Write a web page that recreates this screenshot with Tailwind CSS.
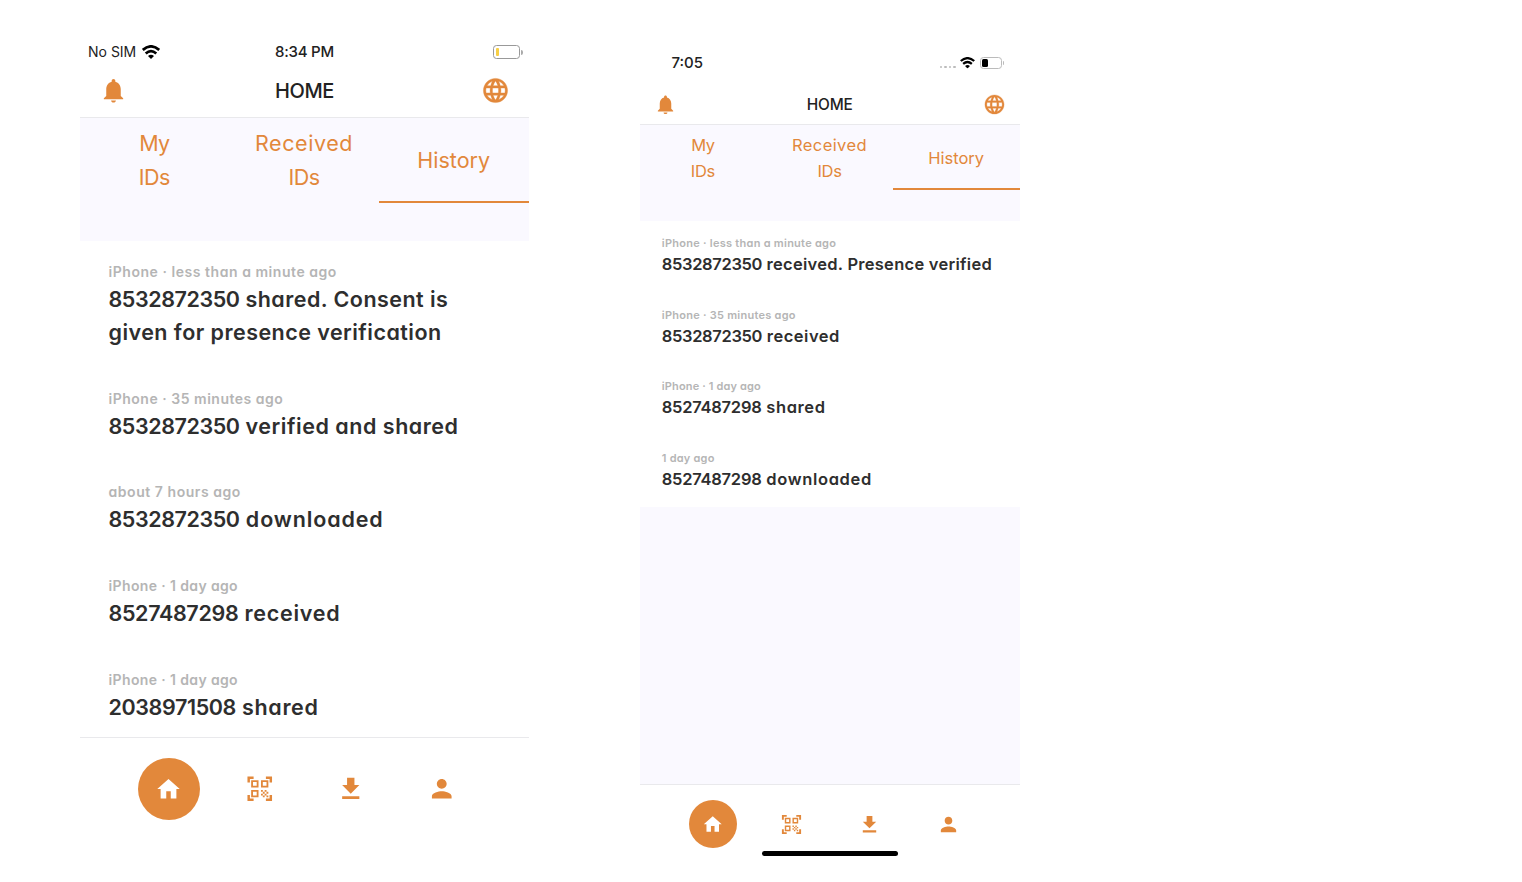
<!DOCTYPE html>
<html lang="en">
<head>
<meta charset="utf-8">
<title>Home – History</title>
<script src="https://cdn.jsdelivr.net/npm/@tailwindcss/browser@4"></script>
</head>
<body class="h-[882px] overflow-hidden bg-white font-[Inter,sans-serif] text-[#2e2e2e] [font-feature-settings:'cv11']">
<svg class="hidden">
  <symbol id="bell" viewBox="0 0 24 24"><path d="M12 22c1.1 0 2-.7 2-1.7h-4c0 1 .89 1.7 2 1.7zm6-5.5v-5.5c0-3.07-1.64-5.64-4.5-6.32V4c0-.83-.67-1.5-1.5-1.5s-1.5.67-1.5 1.5v.68C7.63 5.36 6 7.92 6 11v5.5l-2 2v.7h16v-.7l-2-2z"/></symbol>
  <symbol id="globe" viewBox="0 0 24 24"><path stroke-width=".3" class="stroke-[#e2883b]" d="M11.99 2C6.47 2 2 6.48 2 12s4.47 10 9.99 10C17.52 22 22 17.52 22 12S17.52 2 11.99 2zm6.93 6h-2.95c-.32-1.25-.78-2.45-1.38-3.56 1.84.63 3.37 1.91 4.33 3.56zM12 4.04c.83 1.2 1.48 2.53 1.91 3.96h-3.82c.43-1.43 1.08-2.76 1.91-3.96zM4.26 14C4.1 13.36 4 12.69 4 12s.1-1.36.26-2h3.38c-.08.66-.14 1.32-.14 2s.06 1.34.14 2H4.26zm.82 2h2.95c.32 1.25.78 2.45 1.38 3.56-1.84-.63-3.37-1.9-4.33-3.56zm2.95-8H5.08c.96-1.66 2.49-2.93 4.33-3.56C8.81 5.55 8.35 6.75 8.03 8zM12 19.96c-.83-1.2-1.48-2.53-1.91-3.96h3.82c-.43 1.43-1.08 2.76-1.91 3.96zM14.34 14H9.66c-.09-.66-.16-1.32-.16-2s.07-1.35.16-2h4.68c.09.65.16 1.32.16 2s-.07 1.34-.16 2zm.25 5.56c.6-1.11 1.06-2.31 1.38-3.56h2.95c-.96 1.65-2.49 2.93-4.33 3.56zM16.36 14c.08-.66.14-1.32.14-2s-.06-1.34-.14-2h3.38c.16.64.26 1.31.26 2s-.1 1.36-.26 2h-3.38z"/></symbol>
  <symbol id="home" viewBox="0 0 24 24"><path d="M10 20.5v-6.5h4v6.5h5v-8.5h3L12 3 2 12h3v8.5z"/></symbol>
  <symbol id="qr" viewBox="0 0 24 24"><path d="M9.5 6.5v3h-3v-3h3M11 5H5v6h6V5zm-1.5 9.5v3h-3v-3h3M11 13H5v6h6v-6zm6.5-6.5v3h-3v-3h3M19 5h-6v6h6V5zm-6 8h1.5v1.5H13V13zm1.5 1.5H16V16h-1.5v-1.5zM16 13h1.5v1.5H16V13zm-3 3h1.5v1.5H13V16zm1.5 1.5H16V19h-1.5v-1.5zM16 16h1.5v1.5H16V16zm1.5-1.5H19V16h-1.5v-1.5zm0 3H19V19h-1.5v-1.5zM22 7h-2V4h-3V2h5v5zm0 15v-5h-2v3h-3v2h5zM2 22h5v-2H4v-3H2v5zM2 2v5h2V4h3V2H2z"/></symbol>
  <symbol id="download" viewBox="0 0 24 24"><path d="M5 20.3h14v-2.2H5v2.2zM19 9h-4V3H9v6H5l7 7 7-7z"/></symbol>
  <symbol id="person" viewBox="0 0 24 24"><path d="M12 12c2.21 0 4-1.79 4-4s-1.79-4-4-4-4 1.79-4 4 1.79 4 4 4zm0 2c-2.67 0-8 1.34-8 4v2h16v-2c0-2.66-5.33-4-8-4z"/></symbol>
  <symbol id="wifi" viewBox="0 0 18 14"><path d="M.8 4.9Q9-2.2 17.2 4.9M3.7 8.4q5.3-4.6 10.6 0" fill="none" stroke="currentColor" stroke-width="2.7"/><path d="M6 10.9q3-2.4 6 0L9 14z" fill="currentColor"/></symbol>
</svg>

<main class="flex h-full items-start gap-[111px] pl-[80px]">

  <!-- Sharing device -->
  <section class="flex h-[842px] w-[449px] shrink-0 flex-col pt-[40px]">
    <div class="grid h-[24px] shrink-0 grid-cols-3 items-center text-[15px] leading-[24px]">
      <div class="flex items-center gap-[6px] pl-[8px] text-[#222]">
        <span class="text-[14px]">No SIM</span>
        <svg class="h-[14px] w-[18px] text-black"><use href="#wifi"/></svg>
      </div>
      <div class="text-center font-medium tracking-[-0.22px] text-[#222]">8:34 PM</div>
      <div class="flex items-center justify-end gap-px pr-[6px]">
        <div class="h-[14px] w-[27px] rounded-[3.5px] border border-[#999] p-[2px]"><div class="h-full w-[3px] rounded-[1px] bg-[#f7cf46]"></div></div>
        <div class="h-[5px] w-[2px] rounded-r bg-[#aaa]"></div>
      </div>
    </div>
    <header class="flex h-[54px] shrink-0 items-center justify-between border-b border-[#e9e9ec] pr-[19px] pl-[19px]">
      <svg class="h-[29px] w-[29px] fill-[#e2883b]"><use href="#bell"/></svg>
      <h1 class="text-[20px] leading-[30px] font-medium tracking-[-0.39px] text-[#222]">HOME</h1>
      <svg class="h-[29px] w-[29px] fill-[#e2883b]"><use href="#globe"/></svg>
    </header>
    <nav class="flex h-[123px] shrink-0 bg-[#faf9ff] text-center text-[21.5px] leading-[33.5px] text-[#e2883b]">
      <div class="flex h-[85px] flex-1 flex-col justify-center pr-px"><span class="tracking-[-0.8px]">My</span><span class="tracking-[-0.55px]">IDs</span></div>
      <div class="flex h-[85px] flex-1 flex-col justify-center pr-px"><span class="tracking-[0.57px]">Received</span><span class="tracking-[-0.55px]">IDs</span></div>
      <div class="flex h-[85px] flex-1 flex-col justify-center border-b-[2.5px] border-[#e2883b] pt-[2px] pr-px">History</div>
    </nav>
    <ul class="h-[496px] shrink-0 overflow-hidden pl-[28.5px] text-[21.5px] leading-[33.5px] font-semibold whitespace-nowrap">
      <li class="h-[127.3px] pt-[20.5px]">
        <p class="mb-[2px] text-[14px] leading-[19px] tracking-[0.54px] text-[#b5b5b5]">iPhone · less than a minute ago</p>
        <p class="tracking-[0.46px]"><span class="tracking-[-0.42px]">8532872350</span> shared. Consent is<br>given for presence verification</p>
      </li>
      <li class="h-[93.7px] pt-[20.5px]">
        <p class="mb-[2px] text-[14px] leading-[19px] tracking-[0.51px] text-[#b5b5b5]">iPhone · 35 minutes ago</p>
        <p class="tracking-[0.53px]"><span class="tracking-[-0.42px]">8532872350</span> verified and shared</p>
      </li>
      <li class="h-[93.7px] pt-[20.5px]">
        <p class="mb-[2px] text-[14px] leading-[19px] tracking-[0.55px] text-[#b5b5b5]">about 7 hours ago</p>
        <p class="tracking-[0.86px]"><span class="tracking-[-0.42px]">8532872350</span> downloaded</p>
      </li>
      <li class="h-[93.7px] pt-[20.5px]">
        <p class="mb-[2px] text-[14px] leading-[19px] tracking-[0.37px] text-[#b5b5b5]">iPhone · 1 day ago</p>
        <p class="tracking-[0.75px]"><span class="tracking-[-0.34px]">8527487298</span> received</p>
      </li>
      <li class="h-[93.7px] pt-[20.5px]">
        <p class="mb-[2px] text-[14px] leading-[19px] tracking-[0.37px] text-[#b5b5b5]">iPhone · 1 day ago</p>
        <p class="tracking-[0.65px]"><span class="tracking-[-0.38px]">2038971508</span> shared</p>
      </li>
    </ul>
    <footer class="flex h-[104px] shrink-0 items-center border-t border-[#e9e9ec] pb-[2px] pl-[43px] fill-[#e2883b]">
      <div class="flex w-[91px] justify-center"><div class="flex h-[62px] w-[62px] items-center justify-center rounded-full bg-[#e2883b]"><svg class="h-[28px] w-[27px] fill-white"><use href="#home"/></svg></div></div>
      <div class="flex w-[91px] justify-center"><svg class="h-[29.5px] w-[29.5px]"><use href="#qr"/></svg></div>
      <div class="flex w-[91px] justify-center"><svg class="h-[29.5px] w-[29.5px]"><use href="#download"/></svg></div>
      <div class="flex w-[91px] justify-center"><svg class="h-[29.5px] w-[29.5px]"><use href="#person"/></svg></div>
    </footer>
  </section>

  <!-- Receiving device -->
  <section class="flex h-[870px] w-[380px] shrink-0 flex-col pt-[51px]">
    <div class="flex h-[24px] shrink-0 items-center justify-between pr-[16px] pl-[31.5px]">
      <div class="text-[15px] leading-[24px] font-medium text-[#222]">7:05</div>
      <div class="flex items-center">
        <div class="mt-[8px] mr-[4px] flex gap-[2px]"><i class="size-[2.5px] rounded-full bg-[#bbb]"></i><i class="size-[2.5px] rounded-full bg-[#bbb]"></i><i class="size-[2.5px] rounded-full bg-[#bbb]"></i><i class="size-[2.5px] rounded-full bg-[#bbb]"></i></div>
        <svg class="mr-[5px] h-[11.5px] w-[15px] text-black"><use href="#wifi"/></svg>
        <div class="h-[12px] w-[22.5px] rounded-[3.5px] border border-[#bbb] p-[1px]"><div class="h-full w-[6px] rounded-[1.5px] bg-black"></div></div>
        <div class="ml-px h-[4px] w-px rounded-r bg-[#bbb]"></div>
      </div>
    </div>
    <header class="flex h-[50px] shrink-0 items-end justify-between border-b border-[#e9e9ec] pr-[14.5px] pb-[8.5px] pl-[14px]">
      <svg class="h-[23px] w-[23px] fill-[#e2883b]"><use href="#bell"/></svg>
      <h1 class="text-[15.4px] leading-[22px] font-medium tracking-[-0.15px] text-[#222]">HOME</h1>
      <svg class="h-[23px] w-[23px] fill-[#e2883b]"><use href="#globe"/></svg>
    </header>
    <nav class="flex h-[95.5px] shrink-0 bg-[#faf9ff] text-center text-[16.5px] leading-[25.6px] text-[#e2883b]">
      <div class="flex h-[65px] flex-1 flex-col justify-center pt-[2px] pr-px"><span class="tracking-[-0.6px]">My</span><span class="tracking-[-0.35px]">IDs</span></div>
      <div class="flex h-[65px] flex-1 flex-col justify-center pt-[2px] pr-px"><span class="tracking-[0.41px]">Received</span><span class="tracking-[-0.35px]">IDs</span></div>
      <div class="flex h-[65px] flex-1 flex-col justify-center border-b-[2px] border-[#e2883b] pt-[4px] pr-px">History</div>
    </nav>
    <div class="h-[563.5px] shrink-0 bg-[#faf9ff]">
      <ul class="bg-white pl-[21.8px] text-[16.5px] leading-[25.6px] font-semibold whitespace-nowrap">
        <li class="h-[71.7px] pt-[15.4px]">
          <p class="mb-[2px] text-[11px] leading-[14px] tracking-[0.26px] text-[#b5b5b5]">iPhone · less than a minute ago</p>
          <p class="tracking-[0.27px]"><span class="tracking-[-0.35px]">8532872350</span> received. Presence verified</p>
        </li>
        <li class="h-[71.7px] pt-[15.4px]">
          <p class="mb-[2px] text-[11px] leading-[14px] tracking-[0.25px] text-[#b5b5b5]">iPhone · 35 minutes ago</p>
          <p class="tracking-[0.5px]"><span class="tracking-[-0.35px]">8532872350</span> received</p>
        </li>
        <li class="h-[71.7px] pt-[15.4px]">
          <p class="mb-[2px] text-[11px] leading-[14px] tracking-[0.14px] text-[#b5b5b5]">iPhone · 1 day ago</p>
          <p class="tracking-[0.6px]"><span class="tracking-[-0.25px]">8527487298</span> shared</p>
        </li>
        <li class="h-[71.7px] pt-[15.4px]">
          <p class="mb-[2px] text-[11px] leading-[14px] tracking-[0.22px] text-[#b5b5b5]">1 day ago</p>
          <p class="tracking-[0.65px]"><span class="tracking-[-0.25px]">8527487298</span> downloaded</p>
        </li>
      </ul>
    </div>
    <footer class="flex h-[67px] shrink-0 items-end border-t border-[#e9e9ec] pb-[3px] pl-[34px] fill-[#e2883b]">
      <div class="flex h-[48px] w-[78.3px] items-center justify-center"><div class="flex h-[48px] w-[48px] items-center justify-center rounded-full bg-[#e2883b]"><svg class="h-[22.5px] w-[21.5px] fill-white"><use href="#home"/></svg></div></div>
      <div class="flex h-[48px] w-[78.3px] items-center justify-center"><svg class="h-[23px] w-[23px]"><use href="#qr"/></svg></div>
      <div class="flex h-[48px] w-[78.3px] items-center justify-center"><svg class="h-[23px] w-[23px]"><use href="#download"/></svg></div>
      <div class="flex h-[48px] w-[78.3px] items-center justify-center"><svg class="h-[23px] w-[23px]"><use href="#person"/></svg></div>
    </footer>
    <div class="mx-auto h-[5px] w-[136px] shrink-0 rounded-full bg-black"></div>
  </section>
</main>
</body>
</html>
